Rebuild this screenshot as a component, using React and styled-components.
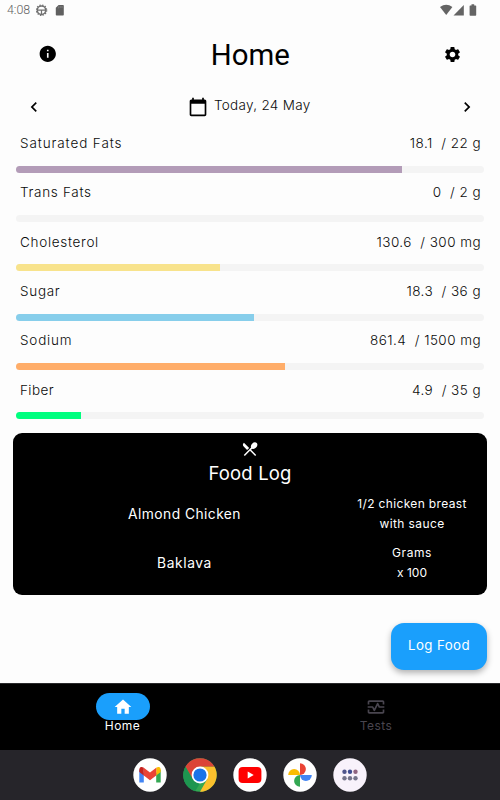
import React from "react";
import styled, { createGlobalStyle } from "styled-components";
import {
  MdInfo,
  MdSettings,
  MdChevronLeft,
  MdChevronRight,
  MdCalendarToday,
  MdRestaurantMenu,
  MdHome,
  MdOutlineMonitorHeart,
} from "react-icons/md";

const GlobalStyle = createGlobalStyle`
  * {
    box-sizing: border-box;
  }

  body {
    margin: 0;
    background: #fdfdfd;
    color: #0b0b0b;
    font-family: Inter, "Open Sans", sans-serif;
  }
`;

const Screen = styled.div`
  width: 500px;
  height: 800px;
  display: flex;
  flex-direction: column;
  overflow: hidden;
  background: #fdfdfd;
`;

const StatusBar = styled.div`
  height: 20px;
  padding: 0 23px 0 7px;
  display: flex;
  justify-content: space-between;
  align-items: center;
  color: #626262;
`;

const StatusGroup = styled.div`
  display: flex;
  align-items: center;
`;

const Clock = styled.span`
  width: 29px;
  font: 300 12.4px/20px Roboto, sans-serif;
`;

const Header = styled.header`
  height: 68px;
  padding: 0 38px;
  display: flex;
  justify-content: space-between;
  align-items: center;
`;

const Title = styled.h1`
  margin: 2px 0 0;
  font: 400 29.4px/36px Roboto, sans-serif;
  color: #000;
`;

const IconBox = styled.span`
  display: flex;
  color: ${({ $color }) => $color || "#000"};
  font-size: ${({ $size }) => $size}px;
`;

const DateRow = styled.div`
  height: 37px;
  padding: 0 22.5px 0 24px;
  display: flex;
  justify-content: space-between;
  align-items: center;
`;

const DateLabel = styled.div`
  padding-right: 3px;
  display: flex;
  align-items: center;
  gap: 6px;
`;

const DateText = styled.span`
  padding-bottom: 4px;
  font-size: 13.5px;
  font-weight: 300;
  line-height: 20px;
  letter-spacing: 0.3px;
`;

const Label = styled.span`
  white-space: pre;
  font-size: ${({ $size }) => $size || 14}px;
  font-weight: ${({ $weight }) => $weight || 300};
  letter-spacing: ${({ $track }) => $track || 0}px;
  line-height: 20px;
`;

const Nutrients = styled.div`
  padding: 8px 16px 0;
  height: 307.5px;
`;

const Nutrient = styled.div`
  height: 49.35px;
`;

const NutrientText = styled.div`
  height: 32.7px;
  padding: 0 3px 0 4px;
  display: flex;
  justify-content: space-between;
`;

const Track = styled.div`
  height: 7px;
  border-radius: 4px;
  background: #f4f4f4;
  overflow: hidden;
`;

const Fill = styled.div`
  height: 100%;
  background: ${({ $color }) => $color};
`;

const FoodLog = styled.section`
  height: 162.5px;
  margin: 0 13px;
  padding-top: 7.5px;
  border-radius: 9px;
  background: #000;
  color: #fff;
  display: flex;
  flex-direction: column;
  align-items: center;
`;

const FoodTitle = styled.h2`
  margin: 2px 0 3px;
  font-size: 18.5px;
  font-weight: 400;
  line-height: 26px;
  letter-spacing: 0.15px;
`;

const FoodRow = styled.div`
  width: 100%;
  height: 49px;
  padding: 0 13px 0 57px;
  display: grid;
  grid-template-columns: 229px 124px;
  justify-content: space-between;
  align-items: center;
  text-align: center;
`;

const Serving = styled.div`
  display: flex;
  flex-direction: column;
  align-items: center;
`;

const ButtonRow = styled.div`
  flex: 1;
  padding: 28px 13px 0;
  display: flex;
  justify-content: flex-end;
  align-items: flex-start;
`;

const LogButton = styled.button`
  width: 96px;
  height: 47px;
  padding: 0 0 4px;
  border: 0;
  border-radius: 13px;
  background: #1a9ffc;
  color: #fff;
  font-family: inherit;
  box-shadow: 0 3px 6px rgba(0, 0, 0, 0.3);
`;

const TabBar = styled.nav`
  height: 67px;
  padding: 9px 0 0;
  display: grid;
  grid-template-columns: 245px 262px;
  background: #000;
  border-top: 1px solid #29292b;
`;

const Tab = styled.div`
  display: flex;
  flex-direction: column;
  align-items: center;
  color: ${({ $active }) => ($active ? "#fff" : "#49454f")};
`;

const Pill = styled.div`
  width: 54px;
  height: 27px;
  border-radius: 14px;
  display: flex;
  justify-content: center;
  align-items: center;
  background: ${({ $active }) => ($active ? "#1a9ffc" : "transparent")};
`;

const TabLabel = styled.span`
  font-size: 12px;
  line-height: 12px;
  letter-spacing: 0.45px;
`;

const Dock = styled.div`
  height: 50px;
  display: flex;
  justify-content: center;
  align-items: center;
  gap: 16px;
  background: #26252a;
`;

const nutrients = [
  { name: "Saturated Fats", track: 0.9, value: "18.1  / 22 g", width: 82.5, color: "#b39cb8" },
  { name: "Trans Fats", track: 0.7, value: "0  / 2 g", width: 0, color: "#b39cb8" },
  { name: "Cholesterol", track: 0.7, value: "130.6  / 300 mg", width: 43.6, color: "#f8e38c" },
  { name: "Sugar", track: 0.7, value: "18.3  / 36 g", width: 50.8, color: "#87ceeb" },
  { name: "Sodium", track: 0.8, value: "861.4  / 1500 mg", width: 57.5, color: "#ffad69" },
  { name: "Fiber", track: 0.4, value: "4.9  / 35 g", width: 13.9, color: "#00ff7f" },
];

const DockIcon = ({ fill = "#fff", children }) => (
  <svg width="34" height="34" viewBox="0 0 34 34">
    <circle cx="17" cy="17" r="16.7" fill={fill} />
    {children}
  </svg>
);

const App = () => {
  return (
    <>
      <GlobalStyle />
      <Screen>
        <StatusBar>
          <StatusGroup>
            <Clock>4:08</Clock>
            <svg width="30" height="14" viewBox="0 0 30 14">
              <g fill="none" stroke="#707070">
                <circle cx="5.5" cy="7.2" r="4.2" strokeWidth="1.5" />
                <circle cx="5.5" cy="7.2" r="5.2" strokeWidth="1.2" strokeDasharray="1.4 1.32" />
                <path d="M1.5 7.2h8M5.5 7.2v4" strokeWidth="1.2" />
              </g>
              <path
                d="M22.6 2H27q.8 0 .8.8v9q0 .8-.8.8h-6.4q-.8 0-.8-.8V4.8z"
                fill="#606060"
              />
              <path d="M22.4 3.4v2M24.2 3v2M26 3v2" stroke="#8a8a8a" strokeWidth=".7" />
            </svg>
          </StatusGroup>
          <svg width="37" height="12" viewBox="0 0 37 12">
            <g fill="#646464">
              <path d="M0 3Q6.2-1.6 12.4 3L6.2 11z" />
              <path d="M23.8 1v10.5H13.5z" />
              <path d="M31.5.2h2.7v1.2h1.3q.7 0 .7.7v9q0 .6-.7.6h-5.2q-.7 0-.7-.6v-9q0-.7.7-.7h1.2z" />
            </g>
          </svg>
        </StatusBar>

        <Header>
          <IconBox $size={19.5}>
            <MdInfo />
          </IconBox>
          <Title>Home</Title>
          <IconBox $size={19}>
            <MdSettings />
          </IconBox>
        </Header>

        <DateRow>
          <IconBox $size={20}>
            <MdChevronLeft />
          </IconBox>
          <DateLabel>
            <IconBox $size={20}>
              <MdCalendarToday />
            </IconBox>
            <DateText>Today, 24 May</DateText>
          </DateLabel>
          <IconBox $size={20}>
            <MdChevronRight />
          </IconBox>
        </DateRow>

        <Nutrients>
          {nutrients.map(({ name, track, value, width, color }) => (
            <Nutrient key={name}>
              <NutrientText>
                <Label $size={13.5} $track={track}>{name}</Label>
                <Label $size={13.5} $track={0.45}>{value}</Label>
              </NutrientText>
              <Track>
                <Fill $color={color} style={{ width: `${width}%` }} />
              </Track>
            </Nutrient>
          ))}
        </Nutrients>

        <FoodLog>
          <IconBox $size={18} $color="#fff">
            <MdRestaurantMenu />
          </IconBox>
          <FoodTitle>Food Log</FoodTitle>
          <FoodRow>
            <Label $size={13.8} $weight={400} $track={0.45}>Almond Chicken</Label>
            <Serving>
              <Label $size={12} $weight={400} $track={0.35}>1/2 chicken breast</Label>
              <Label $size={12} $weight={400} $track={0.4}>with sauce</Label>
            </Serving>
          </FoodRow>
          <FoodRow>
            <Label $size={13.8} $weight={400} $track={0.6}>Baklava</Label>
            <Serving>
              <Label $size={12} $weight={400} $track={0.6}>Grams</Label>
              <Label $size={12} $weight={400}>x 100</Label>
            </Serving>
          </FoodRow>
        </FoodLog>

        <ButtonRow>
          <LogButton>
            <Label $size={13.3} $weight={400} $track={0.4}>Log Food</Label>
          </LogButton>
        </ButtonRow>

        <TabBar>
          <Tab $active>
            <Pill $active>
              <IconBox $size={20} $color="#fff">
                <MdHome />
              </IconBox>
            </Pill>
            <TabLabel>Home</TabLabel>
          </Tab>
          <Tab>
            <Pill>
              <IconBox $size={20} $color="#49454f">
                <MdOutlineMonitorHeart />
              </IconBox>
            </Pill>
            <TabLabel>Tests</TabLabel>
          </Tab>
        </TabBar>

        <Dock>
          <DockIcon>
            <path d="M6.3 11.5v13h4.5V15z" fill="#4285f4" />
            <path d="M27.7 11.5v13h-4.5V15z" fill="#34a853" />
            <path d="M6.3 14v-2.5q0-1.6 1.5-2.4 1.3-.5 3 .7v7.8z" fill="#c5221f" />
            <path d="M27.7 14v-2.5q0-1.6-1.5-2.4-1.3-.5-3 .7v7.8z" fill="#fbbc04" />
            <path d="M10.8 9.8l6.2 4.7 6.2-4.7v7.8L17 22.2l-6.2-4.6z" fill="#ea4335" />
          </DockIcon>
          <DockIcon fill="#34a853">
            <path d="M2.5 8.7A16.7 16.7 0 0 1 31.5 8.7H17L9.8 21.2z" fill="#db4437" />
            <path d="M17 8.7h14.5A16.7 16.7 0 0 1 17 33.7L24.3 21z" fill="#fbc02d" />
            <path d="M2.5 8.7L9.8 21.2 17 25.3l-4.9 8A16.7 16.7 0 0 1 2.5 8.7z" fill="#1e9650" />
            <circle cx="17" cy="17" r="8.4" fill="#fff" />
            <circle cx="17" cy="17" r="6.6" fill="#1a73e8" />
          </DockIcon>
          <DockIcon>
            <rect x="5.6" y="9" width="22.8" height="16" rx="4" fill="#f00" />
            <path d="M14.7 13.5v7l6-3.5z" fill="#fff" />
          </DockIcon>
          <DockIcon>
            <path d="M17 17V5.2a5.9 5.9 0 0 1 0 11.8z" fill="#ea4335" />
            <path d="M17 17h11.8a5.9 5.9 0 0 1-11.8 0z" fill="#4285f4" />
            <path d="M17 17v11.8a5.9 5.9 0 0 1 0-11.8z" fill="#34a853" />
            <path d="M17 17H5.2a5.9 5.9 0 0 1 11.8 0z" fill="#fbbc04" />
          </DockIcon>
          <DockIcon fill="#f8f2fb">
            <circle cx="11.5" cy="13.7" r="2.2" fill="#4f558b" />
            <circle cx="17" cy="13.7" r="2.2" fill="#3f4d91" />
            <circle cx="22.5" cy="13.7" r="2.2" fill="#8f6480" />
            <circle cx="11.5" cy="20.3" r="2.2" fill="#74748a" />
            <circle cx="17" cy="20.3" r="2.2" fill="#74748a" />
            <circle cx="22.5" cy="20.3" r="2.2" fill="#74748a" />
          </DockIcon>
        </Dock>
      </Screen>
    </>
  );
};

export default App;
